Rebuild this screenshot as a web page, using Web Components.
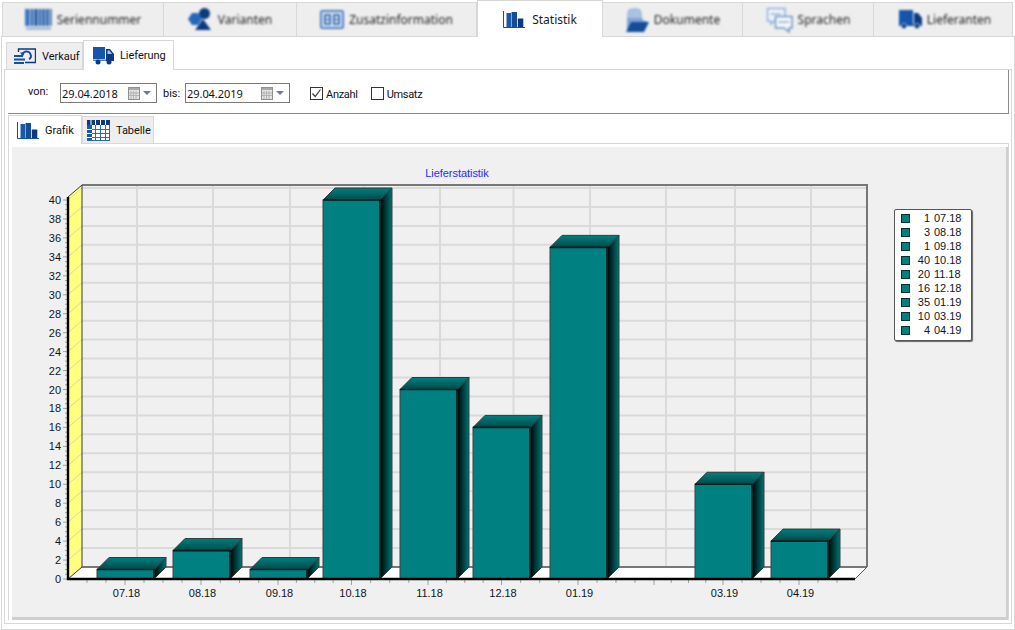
<!DOCTYPE html>
<html lang="de">
<head>
<meta charset="utf-8">
<title>Statistik</title>
<style>
  html, body { margin: 0; padding: 0; background: #fff; }
</style>
</head>
<body>
<stat-window></stat-window>
<script>
const BLUE = '#14509f'
const DARK = '#0b3a80'

// All icons are drawn in their own pixel box, the numbers are read off the screenshot.
const ICONS = {
  barcode: [27, 21, `
    <g fill="${BLUE}"><rect x="0" y="0" width="5" height="17" fill="#3f78c4"/><rect x="6" y="0" width="2" height="17"/><rect x="9" y="0" width="4" height="17" fill="#2a64b2"/>
    <rect x="14" y="0" width="2" height="17"/><rect x="17" y="0" width="3" height="17" fill="#2a64b2"/><rect x="21" y="0" width="2" height="17"/><rect x="23.5" y="0" width="3.5" height="17" fill="#6d8fbd"/></g>
    <rect x="1" y="18.5" width="25" height="2" fill="#8da6c8"/>`],
  variants: [25, 23, `
    <circle cx="16.5" cy="5.5" r="5.5" fill="${DARK}"/>
    <path d="M0 11 L4 5 H10 L14 11 L10 17 H4 Z" fill="#2468bd"/>
    <path d="M15 11 L23 22 H7 Z" fill="${DARK}"/>`],
  info: [24, 19, `
    <rect x="1" y="1" width="22" height="17" rx="1.5" fill="#dbe6f4" stroke="#4f82c4" stroke-width="2"/>
    <path d="M5 5 H10 V14 H5 Z M14 5 H19 V14 H14 Z" fill="none" stroke="#1f5aa5" stroke-width="1.6"/>
    <path d="M5 9.5 H10 M14 9.5 H19" stroke="#1f5aa5"/>`],
  bars: [22, 17, `
    <path d="M.5 0 V16.5 H22" fill="none" stroke="${BLUE}"/>
    <rect x="3.5" y="2" width="4.5" height="14" fill="#1a5aa8"/>
    <rect x="8.5" y="1" width="5.5" height="15" fill="#134d98"/>
    <rect x="14.8" y="7.5" width="5.5" height="8.5" fill="${DARK}"/>`],
  folder: [24, 24, `
    <path d="M3 20 V5 Q3 1 8 1 H12 Q16 1 16 5 V11 H3" fill="#a9c2e3" stroke="#8aa8d2"/>
    <path d="M2 10 H17 L19 13 H22 V15 H6 L2 23 Z" fill="#7ea3d6"/>
    <path d="M6 14 H24 L19 24 H1 Z" fill="#134d98"/>`],
  chat: [27, 26, `
    <path d="M1.5 1.5 H19 V14 H8 L5 17 V14 H1.5 Z" fill="#eef3fa" stroke="#8fb0da" stroke-width="1.5"/>
    <path d="M5 7 H15" stroke="#6f95c8" stroke-width="1.6" stroke-dasharray="2 1"/>
    <path d="M9.5 9.5 H26 V21 H23 V25 L18 21 H9.5 Z" fill="#f4f7fb" stroke="#6f95c8" stroke-width="1.5"/>
    <path d="M13 15 H23" stroke="#5d87c0" stroke-width="1.6" stroke-dasharray="2 1"/>`],
  truck: [23, 19, `
    <rect x="0" y="0" width="14" height="14" fill="#1555ab"/>
    <path d="M15 3 H19 L23 8 V15 H15 Z" fill="${DARK}"/>
    <rect x="0" y="14" width="23" height="2" fill="${BLUE}"/>
    <circle cx="5" cy="16" r="2.7" fill="${DARK}" stroke="#fff" stroke-width=".6"/>
    <circle cx="18" cy="16" r="2.7" fill="${DARK}" stroke="#fff" stroke-width=".6"/>`],
  truckSharp: [21, 18, `
    <rect x="0" y="0" width="12" height="12" fill="#1555ab"/>
    <path d="M13 2 H17 L21 7 V14 H13 Z" fill="${DARK}"/>
    <path d="M14.5 3.5 H16.5 L19 7 H14.5 Z" fill="#a9c2e3"/>
    <rect x="0" y="12.5" width="13" height="1.5" fill="#4d80c4"/>
    <circle cx="5" cy="15" r="2.5" fill="${DARK}"/>
    <circle cx="16" cy="15" r="2.5" fill="${DARK}"/>`],
  money: [22, 17, `
    <path d="M4.5 4 V1 H21.5 V14.5 H11" fill="none" stroke="${DARK}" stroke-width="1.4"/>
    <path d="M8.5 7 A4 3.2 0 0 1 16.5 6.5 A3 3 0 0 1 15 11" fill="none" stroke="${BLUE}" stroke-width="2"/>
    <path d="M6 4.5 L10.5 4.5 L9 8.5 Z" fill="${BLUE}"/>
    <path d="M0 7 H9 V9 H0 Z M0 10.5 H11 V12.5 H0 Z M0 14 H10 V16 H0 Z" fill="${BLUE}"/>`],
  table: [23, 21, `
    <rect x="0" y="0" width="23" height="21" fill="#fff"/>
    <rect x="0" y="0" width="23" height="5" fill="${DARK}"/>
    <path d="M4 0 V5 M8.5 0 V5 M13.5 0 V5 M18.5 0 V5" stroke="#fff"/>
    <rect x="0" y="5" width="5" height="16" fill="#1a5aa8"/>
    <path d="M0 9.5 H23 M0 13.5 H23 M0 17.5 H23 M0 20.5 H23 M8.5 5 V21 M13.5 5 V21 M18.5 5 V21 M22.5 5 V21" stroke="#2a68b8"/>
    <path d="M0 9.5 H5 M0 13.5 H5 M0 17.5 H5" stroke="#fff"/>`],
  calendar: [13, 13, `
    <rect x=".5" y=".5" width="11" height="12" fill="#e4e4e4" stroke="#8f8f8f"/>
    <rect x="1" y="1" width="10" height="2" fill="#a9a9a9"/>
    <path d="M3 4 V12 M5.5 4 V12 M8 4 V12 M1 6 H11 M1 8.5 H11" stroke="#b4b4b4"/>`]
}

class UiIcon extends HTMLElement {
  connectedCallback() {
    const [width, height, body] = ICONS[this.getAttribute('name')]
    this.attachShadow({ mode: 'open' }).innerHTML = `<style>
      :host { display: block; flex: none; line-height: 0; }
    </style>
    <svg width="${width}" height="${height}" viewBox="0 0 ${width} ${height}">${body}</svg>`
  }
}

// A tab of the top row; the inactive ones are blurred in the reference.
class MainTab extends HTMLElement {
  connectedCallback() {
    const width = this.getAttribute('width')
    this.attachShadow({ mode: 'open' }).innerHTML = `<style>
      :host {
        display: flex;
        box-sizing: border-box;
        width: ${width}px;
        height: 34px;
        align-items: center;
        justify-content: center;
        padding-left: ${this.getAttribute('pad') || 0}px;
        background: #eeeeee;
        border: 1px solid #d8d8d8;
        border-width: 1px 1px 0 0;
        color: #1e1e1e;
        position: relative;
      }
      :host(:first-child) { border-left-width: 1px; }
      :host([active]) {
        height: 37px;
        background: #fff;
        border-width: 1px 1px 0 1px;
        color: #1c1c1c;
        z-index: 1;
        margin-bottom: -1px;
      }
      .in { display: flex; align-items: center; gap: 5px; filter: blur(.95px); }
      :host([active]) .in { filter: none; gap: 7px; }
    </style>
    <div class="in"><slot></slot></div>`
  }
}

class SubTab extends HTMLElement {
  connectedCallback() {
    this.attachShadow({ mode: 'open' }).innerHTML = `<style>
      :host {
        display: flex;
        box-sizing: border-box;
        width: ${this.getAttribute('width')}px;
        height: ${this.getAttribute('h') || 27}px;
        align-items: center;
        gap: 6px;
        padding-left: ${this.getAttribute('pad') || 7}px;
        background: #eeeeee;
        border: 1px solid #d8d8d8;
        border-bottom: 0;
        position: relative;
      }
      :host([active]) { background: #fff; z-index: 1; margin-bottom: -1px; }
    </style>
    <slot></slot>`
  }
}

class DateField extends HTMLElement {
  connectedCallback() {
    this.attachShadow({ mode: 'open' }).innerHTML = `<style>
      :host {
        display: flex;
        box-sizing: border-box;
        width: ${this.getAttribute('width')}px;
        height: 20px;
        align-items: center;
        padding: 0 5px 0 1px;
        border: 1px solid #7a7a7a;
        background: #fff;
        font: 11px "Noto Sans", sans-serif;
      }
      span { flex: 1; }
      i { width: 0; height: 0; margin-left: 2px; border: 4px solid transparent; border-top: 4px solid #6d7b8d; border-bottom: 0; }
    </style>
    <span>${this.getAttribute('value')}</span>
    <ui-icon name="calendar"></ui-icon><i></i>`
  }
}

class CheckField extends HTMLElement {
  connectedCallback() {
    const mark = this.hasAttribute('checked') ? '<path d="M2.5 6.5 L5.2 9.5 L10.5 2.5" fill="none" stroke="#3a3a3a" stroke-width="1.2"/>' : ''
    this.attachShadow({ mode: 'open' }).innerHTML = `<style>
      :host { display: flex; align-items: center; gap: 3px; letter-spacing: -.3px; }
      svg { display: block; }
      span { padding-top: 2px; }
    </style>
    <svg width="13" height="13" viewBox="0 0 13 13"><rect x=".5" y=".5" width="12" height="12" fill="#fff" stroke="#333"/>${mark}</svg>
    <span><slot></slot></span>`
  }
}

// Coordinates are the page's own, the viewBox starts where the chart starts.
class BarChart extends HTMLElement {
  static bars = [
    { value: 1, from: 97 }, { value: 3, from: 173 }, { value: 1, from: 250 },
    { value: 40, from: 323 }, { value: 20, from: 400 }, { value: 16, from: 473 },
    { value: 35, from: 550 }, { value: 10, from: 695 }, { value: 4, from: 771 }
  ]
  static months = [
    [125, '07.18'], [201, '08.18'], [278, '09.18'], [351.5, '10.18'], [428, '11.18'],
    [501.5, '12.18'], [578, '01.19'], [654, ''], [723, '03.19'], [799, '04.19']
  ]

  connectedCallback() {
    const yOf = (v) => 579 - v * 9.475
    let grid = '', wall = '', yTicks = '', yLabels = ''
    for (let v = 0; v <= 40; v += 2) {
      const y = yOf(v)
      if (v) grid += `<path d="M82 ${y - 12} H867"/>`
      if (v) wall += `<path d="M68 ${y} L82 ${y - 12}"/>`
      yLabels += `<text x="61" y="${y + 4}" text-anchor="end">${v}</text>`
      yTicks += `<path d="M63 ${y} H68"/>`
      if (v < 40) for (let k = 1; k < 4; k++) yTicks += `<path d="M65 ${y - k * 4.74} H68"/>`
    }
    let xTicks = '', xLabels = ''
    const months = BarChart.months
    months.forEach(([x, label], i) => {
      grid += `<path d="M${x + 12} 185 V567"/>`
      xTicks += `<path d="M${x} 580 V585"/>`
      if (label) xLabels += `<text x="${x + 1.5}" y="597" text-anchor="middle">${label}</text>`
      const next = i < months.length - 1 ? months[i + 1][0] : x + 76
      const gap = (next - x) / 4
      for (let k = 1; k < 4; k++) if (x + k * gap < 855) xTicks += `<path d="M${x + k * gap} 580 V583"/>`
    })
    xTicks += `<path d="M87 580 V583 M106 580 V583"/>`
    const bars = BarChart.bars.map(({ value, from }) => {
      const to = from + 57, y = yOf(value)
      return `<polygon points="${to},${y} ${to + 12},${y - 12} ${to + 12},567 ${to},579" fill="url(#side)" stroke="#3c3c3c"/>
        <polygon points="${from},${y} ${from + 12},${y - 12} ${to + 12},${y - 12} ${to},${y}" fill="url(#top)" stroke="#2d3b3b"/>
        <rect x="${from}" y="${y}" width="57" height="${579 - y}" fill="#008080" stroke="#404040"/>
        <path d="M${from} ${y} H${to} V579" fill="none" stroke="#062020" stroke-width="1.6"/>`
    }).join('')
    this.attachShadow({ mode: 'open' }).innerHTML = `<style>
      :host {
        display: block;
        position: relative;
        box-sizing: border-box;
        height: 473px;
        background: #f0f0f0;
        border: solid #cfcfcf;
        border-width: 0 2px 3px 0;
      }
      svg { display: block; }
      text { font: 11px "Liberation Sans", Arial, sans-serif; fill: #10141c; }
      .title { fill: #2a2aff; }
      .grid path { stroke: #dadada; stroke-width: 2; fill: none; }
      .wall path { stroke: #d8d8a8; fill: none; }
      .ticks path { stroke: #a0a0a0; fill: none; }
      .legend { position: absolute; left: 882px; top: 62px; }
    </style>
    <svg width="991" height="470" viewBox="12 147 991 470">
      <defs>
        <linearGradient id="top" x1="0" y1="0" x2="0" y2="1"><stop offset="0" stop-color="#008080"/><stop offset="1" stop-color="#004848"/></linearGradient>
        <linearGradient id="side" x1="0" y1="0" x2="1" y2="0"><stop offset="0" stop-color="#000"/><stop offset="1" stop-color="#007575"/></linearGradient>
      </defs>
      <text class="title" x="457" y="177" text-anchor="middle">Lieferstatistik</text>
      <polygon points="68,579 82,567 867,567 855,579" fill="#fff"/>
      <g class="grid">${grid}</g>
      <polygon points="68,197 82,185 82,567 68,579" fill="#ffff80"/>
      <g class="wall">${wall}</g>
      <path d="M82 567 H867 M82 185 H867 V567" fill="none" stroke="#777" stroke-width="2"/>
      <path d="M82 185 V567 M82 567 L68 579 M68 197 L82 185" fill="none" stroke="#3a3a3a"/>
      <path d="M867 567 L855 579" stroke="#555"/>
      ${bars}
      <g class="ticks">${yTicks}${xTicks}</g>
      <path d="M68 197 V579 H855" fill="none" stroke="#000" stroke-width="2.4"/>
      ${yLabels}${xLabels}
    </svg>
    <chart-legend class="legend"></chart-legend>`
  }
}

class ChartLegend extends HTMLElement {
  connectedCallback() {
    const rows = [['1', '07.18'], ['3', '08.18'], ['1', '09.18'], ['40', '10.18'], ['20', '11.18'], ['16', '12.18'], ['35', '01.19'], ['10', '03.19'], ['4', '04.19']]
    this.attachShadow({ mode: 'open' }).innerHTML = `<style>
      :host {
        display: grid;
        box-sizing: border-box;
        width: 78px;
        height: 132px;
        padding: 1px 0 0 6px;
        grid-template-columns: 9px 20px 31px;
        grid-auto-rows: 14px;
        align-items: center;
        background: #fff;
        border: 1px solid #555;
        border-radius: 2px;
        box-shadow: 1px 1px 1px #666;
        font: 11px "Liberation Sans", Arial, sans-serif;
        color: #10141c;
      }
      i { width: 9px; height: 9px; box-sizing: border-box; background: #008080; border: 1px solid #063030; }
      b { font-weight: normal; text-align: right; }
      span { padding-left: 4px; }
    </style>
    ${rows.map(([n, m]) => `<i></i><b>${n}</b><span>${m}</span>`).join('')}`
  }
}

class StatWindow extends HTMLElement {
  connectedCallback() {
    this.attachShadow({ mode: 'open' }).innerHTML = `<style>
      :host {
        display: block;
        width: 1015px;
        height: 630px;
        overflow: hidden;
        font: 11px Roboto, "Noto Sans", sans-serif;
        letter-spacing: -.05px;
        color: #111;
      }
      .top { display: flex; height: 36px; padding-left: 2px; align-items: flex-end; box-sizing: border-box; font: 12px "Noto Sans", sans-serif; letter-spacing: 0; }
      .panel {
        box-sizing: border-box;
        height: 594px;
        margin-left: 1px;
        padding-top: 3px;
        border: 1px solid #d8d8d8;
      }
      .row { display: flex; align-items: flex-end; height: 29px; }
      .row.one { padding-left: 4px; }
      .page {
        box-sizing: border-box;
        height: 555px;
        margin: 0 2px;
        padding: 0 2px 0 3px;
        border: 1px solid #d8d8d8;
      }
      .tools {
        display: flex;
        box-sizing: border-box;
        height: 44px;
        align-items: center;
        padding: 3px 0 0 20px;
        border-right: 1px solid #8a8a8a;
        border-bottom: 1px solid #8a8a8a;
      }
      .von { width: 32px; margin-bottom: 3px; }
      .bis { width: 22px; margin-left: 6px; }
      .chk { margin-left: 20px; }
      .chk2 { margin-left: 13px; }
      .sheet {
        box-sizing: border-box;
        height: 477px;
        padding: 3px 0 0 3px;
        border: 1px solid #d8d8d8;
        border-bottom: 0;
      }
    </style>
    <div class="top">
      <main-tab width="162"><ui-icon name="barcode"></ui-icon>Seriennummer</main-tab>
      <main-tab width="133"><ui-icon name="variants"></ui-icon>Varianten</main-tab>
      <main-tab width="180"><ui-icon name="info"></ui-icon>Zusatzinformation</main-tab>
      <main-tab width="126" active><ui-icon name="bars"></ui-icon>Statistik</main-tab>
      <main-tab width="140"><ui-icon name="folder"></ui-icon>Dokumente</main-tab>
      <main-tab width="131"><ui-icon name="chat"></ui-icon>Sprachen</main-tab>
      <main-tab width="139" pad="4"><ui-icon name="truck"></ui-icon>Lieferanten</main-tab>
    </div>
    <div class="panel">
      <div class="row one">
        <sub-tab width="77"><ui-icon name="money"></ui-icon>Verkauf</sub-tab>
        <sub-tab width="91" h="30" pad="9" active><ui-icon name="truckSharp"></ui-icon>Lieferung</sub-tab>
      </div>
      <div class="page">
        <div class="tools">
          <span class="von">von:</span>
          <date-field width="97" value="29.04.2018"></date-field>
          <span class="bis">bis:</span>
          <date-field width="105" value="29.04.2019"></date-field>
          <check-field class="chk" checked>Anzahl</check-field>
          <check-field class="chk2">Umsatz</check-field>
        </div>
        <div class="row" style="height:29px">
          <sub-tab width="74" h="29" pad="8" active><ui-icon name="bars"></ui-icon>Grafik</sub-tab>
          <sub-tab width="72" pad="4"><ui-icon name="table"></ui-icon>Tabelle</sub-tab>
        </div>
        <div class="sheet"><bar-chart></bar-chart></div>
      </div>
    </div>`
  }
}

customElements.define('ui-icon', UiIcon)
customElements.define('main-tab', MainTab)
customElements.define('sub-tab', SubTab)
customElements.define('date-field', DateField)
customElements.define('check-field', CheckField)
customElements.define('chart-legend', ChartLegend)
customElements.define('bar-chart', BarChart)
customElements.define('stat-window', StatWindow)
</script>
</body>
</html>
